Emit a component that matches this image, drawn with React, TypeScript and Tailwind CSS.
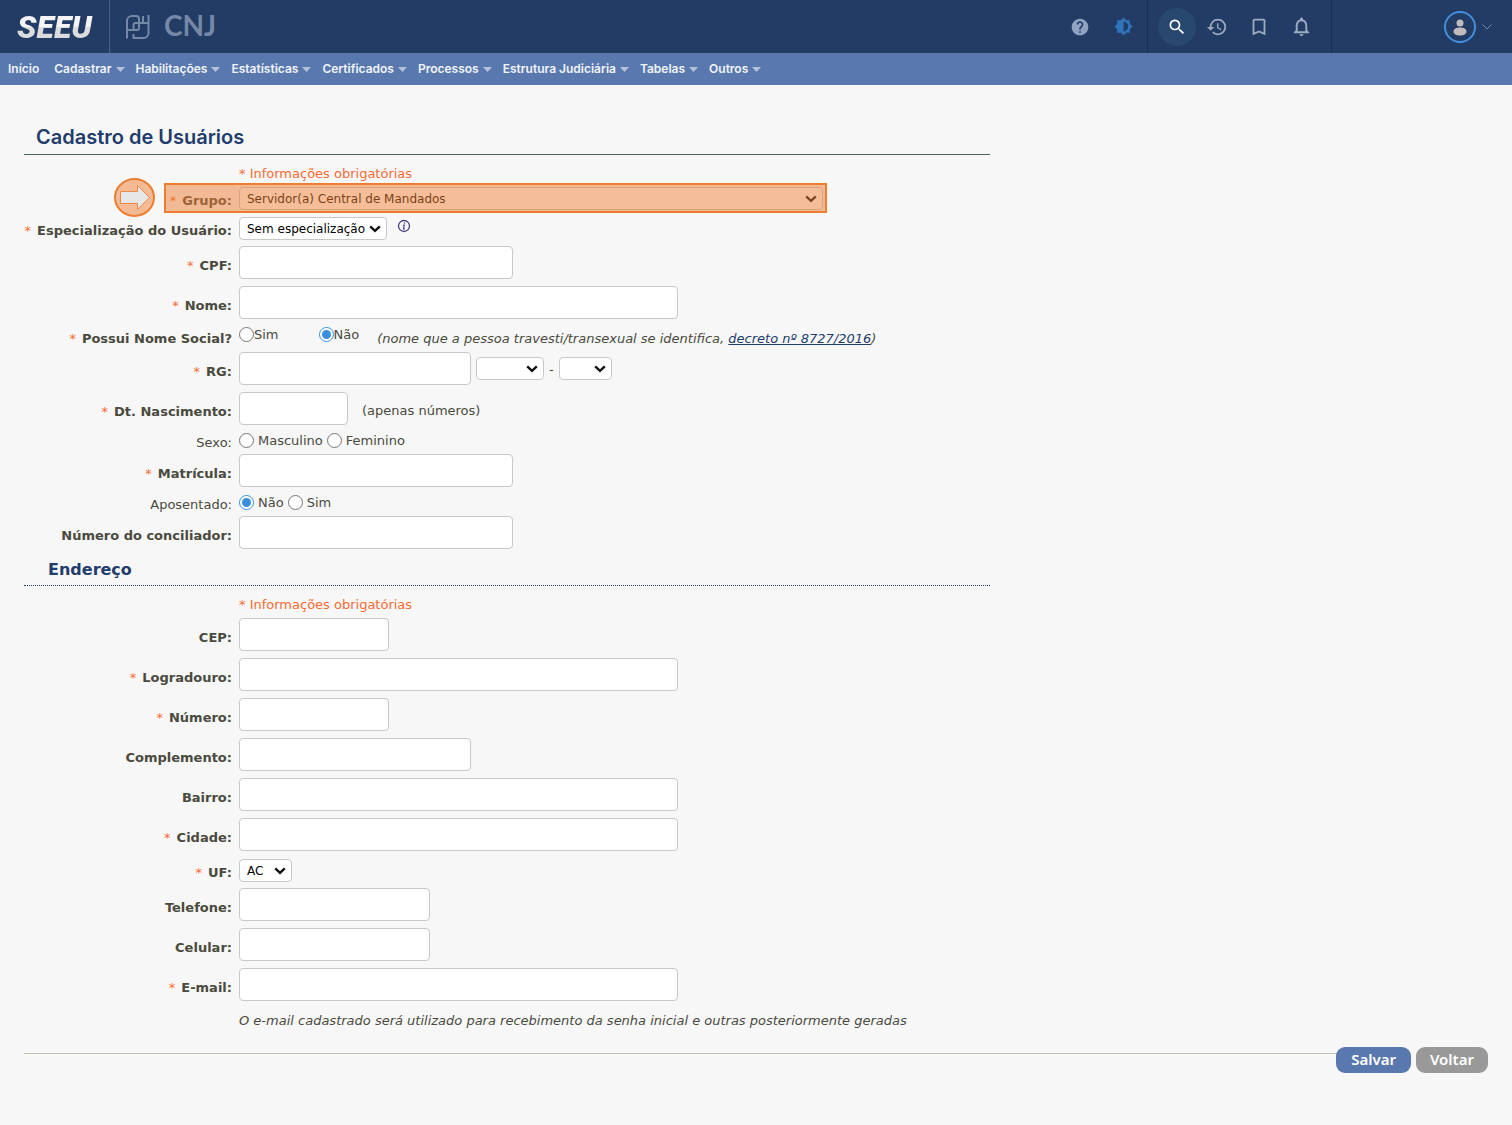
import React from "react";
import {
  MdHelp,
  MdBrightness6,
  MdSearch,
  MdHistory,
  MdBookmarkBorder,
  MdNotificationsNone,
} from "react-icons/md";

const menu = [
  "Início",
  "Cadastrar",
  "Habilitações",
  "Estatísticas",
  "Certificados",
  "Processos",
  "Estrutura Judiciária",
  "Tabelas",
  "Outros",
];

function Header() {
  return (
    <header className="flex h-[53px] items-stretch bg-[#223c66]">
      <a
        href="#"
        className="flex w-[110px] items-center justify-center border-r border-[#4a6285] font-['Roboto'] text-[32px] leading-none font-black text-[#f1f1f1] italic"
      >
        <span className="bg-linear-to-b from-[#f4f4f4] from-50% to-[#dcdcdc] to-50% bg-clip-text px-1 text-transparent">SEEU</span>
      </a>
      <div className="flex items-center gap-3.5 pl-4 text-[#7588a6]">
        <svg width="24" height="24" viewBox="0 0 24 24" fill="none" stroke="currentColor" strokeWidth="2" aria-hidden="true">
          <path d="M1 23.500V6a5 5 0 0 1 5-5h4a3 3 0 0 1 3 3v9a2 2 0 0 1-2 2H1" />
          <path d="M22.500 8H9.500a2 2 0 0 0-2 2v4" />
          <path d="M17 1v7M22.500 0v18a5 5 0 0 1-5 5H7.500v-4" />
        </svg>
        <span className="pb-1 font-['Lato'] text-[28px] leading-none font-bold">CNJ</span>
      </div>
      <div className="flex-1" />
      <div className="flex items-center gap-6 pr-3.5">
        <button aria-label="Ajuda" className="text-[#8fa3c0]">
          <MdHelp size={20} />
        </button>
        <button aria-label="Contraste" className="text-[#2f74bb]">
          <MdBrightness6 size={19} />
        </button>
      </div>
      <div className="flex items-center border-x border-[#182f54] pr-[18px] pl-2.5">
        <button aria-label="Buscar" className="flex size-[38px] items-center justify-center rounded-full bg-[#29486f] text-white">
          <MdSearch size={20} />
        </button>
        <button aria-label="Histórico" className="ml-2.5 text-[#9dabc0]">
          <MdHistory size={22} />
        </button>
        <button aria-label="Favoritos" className="ml-5 text-[#9dabc0]">
          <MdBookmarkBorder size={22} />
        </button>
        <button aria-label="Notificações" className="ml-5 text-[#9dabc0]">
          <MdNotificationsNone size={23} />
        </button>
      </div>
      <button aria-label="Perfil" className="ml-28 flex items-center gap-1.5 pr-5">
        <svg width="32" height="32" viewBox="0 0 32 32" aria-hidden="true">
          <circle cx="16" cy="16" r="15" fill="none" stroke="#448fdc" strokeWidth="2" />
          <circle cx="16" cy="12" r="3.500" fill="#bfbcbb" />
          <path d="M9.500 20.500c0-2.800 3-4 6.500-4s6.500 1.200 6.500 4c0 2.500-3 4-6.500 4s-6.500-1.500-6.500-4z" fill="#bfbcbb" />
        </svg>
        <svg width="10" height="6" viewBox="0 0 10 6" fill="none" stroke="#7588a6" aria-hidden="true">
          <path d="M.5.5 5 5 9.500.5" />
        </svg>
      </button>
    </header>
  );
}

function Nav() {
  return (
    <nav className="flex h-8 items-center gap-[11px] bg-[#5979ae] px-2 font-['Inter'] text-[12px] font-semibold text-[#f0f3f8]">
      {menu.map((item, i) => (
        <a key={item} href="#" className={"flex items-center gap-1 whitespace-nowrap " + (i === 0 ? "mr-1" : "")}>
          {item}
          {i > 0 && (
            <svg width="9" height="5" viewBox="0 0 9 5" fill="#b4c1d9" aria-hidden="true">
              <path d="M0 0h9L4.500 5z" />
            </svg>
          )}
        </a>
      ))}
    </nav>
  );
}

type RowProps = {
  label: string;
  id?: string;
  required?: boolean;
  light?: boolean;
  size?: "field" | "select" | "radio" | "text";
  overlay?: React.ReactNode;
  children: React.ReactNode;
};

const rowSize = {
  field: "min-h-10",
  select: "min-h-[30px]",
  text: "min-h-[26px]",
  radio: "min-h-[22px]",
};

function Row({ label, id, required, light, size = "field", overlay, children }: RowProps) {
  return (
    <div className={"relative flex items-center gap-[7px] " + rowSize[size]}>
      <div className="w-52 shrink-0 pt-1.5 text-right whitespace-nowrap">
        {required && <span className="mr-1.5 text-[#f96a33]">*</span>}
        {id ? (
          <label htmlFor={id} className={light ? "" : "font-bold"}>{label}</label>
        ) : (
          <span className={light ? "" : "font-bold"}>{label}</span>
        )}
      </div>
      <div className="flex items-center">{children}</div>
      {overlay}
    </div>
  );
}

function Field({ id, width }: { id: string; width: string }) {
  return (
    <input id={id} type="text" className={"mb-0.5 h-[33px] rounded border border-[#c8c8c8] bg-white px-2 " + width} />
  );
}

function Select({ id, width, value, label }: { id: string; width: string; value: string; label?: string }) {
  return (
    <span className={"relative flex " + width}>
      <select
        id={id}
        aria-label={label}
        className="h-[23px] w-full appearance-none rounded border border-[#c8c8c8] bg-white pt-px pl-[7px] text-[12px] text-black"
      >
        <option>{value}</option>
      </select>
      <svg className="pointer-events-none absolute top-2 right-1.5" width="12" height="8" viewBox="0 0 12 8" fill="none" stroke="#111" strokeWidth="2.400" aria-hidden="true">
        <path d="M1.200 1.300 6 5.900l4.800-4.600" />
      </svg>
    </span>
  );
}

function Radio({ name, label, checked, tight }: { name: string; label: string; checked?: boolean; tight?: boolean }) {
  return (
    <label className={"flex items-center " + (tight ? "" : "mr-1 gap-1")}>
      <input type="radio" name={name} defaultChecked={checked} className="size-[15px] accent-[#3a8ee0]" />
      <span className="pt-0.5">{label}</span>
    </label>
  );
}

function Required() {
  return <p className="pl-[215px] text-[#f96a33]">* Informações obrigatórias</p>;
}

function Highlight() {
  return (
    <>
      <div className="pointer-events-none absolute top-0 left-[140px] h-[30px] w-[663px] border-2 border-[#ed7d31] bg-[#ed7d31]/50" />
      <svg className="pointer-events-none absolute -top-[5px] left-[90px]" width="41" height="39" viewBox="0 0 41 39" aria-hidden="true">
        <ellipse cx="20.500" cy="19.500" rx="19.500" ry="18.500" fill="#f3ba94" stroke="#ed7d31" strokeWidth="2" />
        <path d="M6.500 13.500h17v-6l12 12-12 12v-6h-17z" fill="#e7e6e6" stroke="#ed8b49" />
      </svg>
    </>
  );
}

export default function App() {
  return (
    <div className="min-h-screen bg-[#f7f7f7] font-['DejaVu_Sans',sans-serif] text-[13px] leading-4 text-[#4a4a3e]">
      <Header />
      <Nav />
      <main className="px-6 pt-[38px]">
        <form onSubmit={(e) => e.preventDefault()}>
          <div className="w-[66%]">
            <h1 className="border-b border-[#4b6161] pb-0.5 pl-3 font-['Inter'] text-[20px] leading-[29px] font-semibold text-[#223c6b]">
              Cadastro de Usuários
            </h1>
            <div className="pt-[11px] pb-px">
              <Required />
            </div>
            <Row label="Grupo:" id="grupo" required size="select" overlay={<Highlight />}>
              <Select id="grupo" width="w-[584px]" value="Servidor(a) Central de Mandados" />
            </Row>
            <Row label="Especialização do Usuário:" id="espec" required size="select">
              <Select id="espec" width="w-[148px]" value="Sem especialização" />
              <svg className="mb-1 ml-2.5" width="14" height="14" viewBox="0 0 14 14" fill="none" stroke="#4c3f86" aria-hidden="true">
                <circle cx="7" cy="7" r="5.500" strokeWidth="1.300" />
                <path d="M7.700 3.500l-.3 1.200M6 6h1.200l-.7 4H8" strokeWidth="1.200" />
              </svg>
            </Row>
            <Row label="CPF:" id="cpf" required>
              <Field id="cpf" width="w-[274px]" />
            </Row>
            <Row label="Nome:" id="nome" required>
              <Field id="nome" width="w-[439px]" />
            </Row>
            <Row label="Possui Nome Social?" required size="text">
              <div className="flex gap-10 pb-1">
                <Radio name="social" label="Sim" tight />
                <Radio name="social" label="Não" checked tight />
              </div>
              <span className="ml-[18px] pt-1.5 whitespace-nowrap italic">
                (nome que a pessoa travesti/transexual se identifica,{" "}
                <a href="#" className="text-[#223c6b] underline">decreto nº 8727/2016</a>)
              </span>
            </Row>
            <Row label="RG:" id="rg" required>
              <Field id="rg" width="w-[232px]" />
              <span className="mb-0.5 ml-[5px] flex items-center gap-[5px]">
                <Select id="orgao" label="Órgão expedidor" width="w-[68px]" value="" />
                <span className="pt-1">-</span>
                <Select id="rguf" label="UF do RG" width="w-[53px]" value="" />
              </span>
            </Row>
            <Row label="Dt. Nascimento:" id="nasc" required>
              <Field id="nasc" width="w-[109px]" />
              <span className="ml-3.5 pt-1">(apenas números)</span>
            </Row>
            <Row label="Sexo:" light size="radio">
              <Radio name="sexo" label="Masculino" />
              <Radio name="sexo" label="Feminino" />
            </Row>
            <Row label="Matrícula:" id="matricula" required>
              <Field id="matricula" width="w-[274px]" />
            </Row>
            <Row label="Aposentado:" light size="radio">
              <Radio name="aposentado" label="Não" checked />
              <Radio name="aposentado" label="Sim" />
            </Row>
            <Row label="Número do conciliador:" id="conciliador">
              <Field id="conciliador" width="w-[274px]" />
            </Row>

            <h2 className="border-b border-dotted border-[#223c6b] pt-[7px] pb-[5px] pl-6 text-[16px] leading-5 font-bold text-[#223c6b]">
              Endereço
            </h2>
            <div className="pt-[11px] pb-0.5">
              <Required />
            </div>
            <Row label="CEP:" id="cep">
              <Field id="cep" width="w-[150px]" />
            </Row>
            <Row label="Logradouro:" id="logradouro" required>
              <Field id="logradouro" width="w-[439px]" />
            </Row>
            <Row label="Número:" id="numero" required>
              <Field id="numero" width="w-[150px]" />
            </Row>
            <Row label="Complemento:" id="complemento">
              <Field id="complemento" width="w-[232px]" />
            </Row>
            <Row label="Bairro:" id="bairro">
              <Field id="bairro" width="w-[439px]" />
            </Row>
            <Row label="Cidade:" id="cidade" required>
              <Field id="cidade" width="w-[439px]" />
            </Row>
            <Row label="UF:" id="uf" required size="select">
              <Select id="uf" width="w-[53px]" value="AC" />
            </Row>
            <Row label="Telefone:" id="telefone">
              <Field id="telefone" width="w-[191px]" />
            </Row>
            <Row label="Celular:" id="celular">
              <Field id="celular" width="w-[191px]" />
            </Row>
            <Row label="E-mail:" id="email" required>
              <Field id="email" width="w-[439px]" />
            </Row>
            <p className="pt-2 pl-[215px] whitespace-nowrap italic">
              O e-mail cadastrado será utilizado para recebimento da senha inicial e outras posteriormente geradas
            </p>
          </div>
          <div className="flex items-start pt-[18px] pb-8">
            <div className="mt-1.5 h-px flex-1 bg-[#c4bfae]" />
            <div className="flex gap-[5px] font-['Noto_Sans'] text-[15px] leading-6 font-semibold text-white">
              <button type="submit" className="rounded-[9px] bg-[#5979ae] px-[15px] pb-0.5">Salvar</button>
              <button type="button" className="rounded-[9px] bg-[#999999] px-3.5 pb-0.5">Voltar</button>
            </div>
          </div>
        </form>
      </main>
    </div>
  );
}
